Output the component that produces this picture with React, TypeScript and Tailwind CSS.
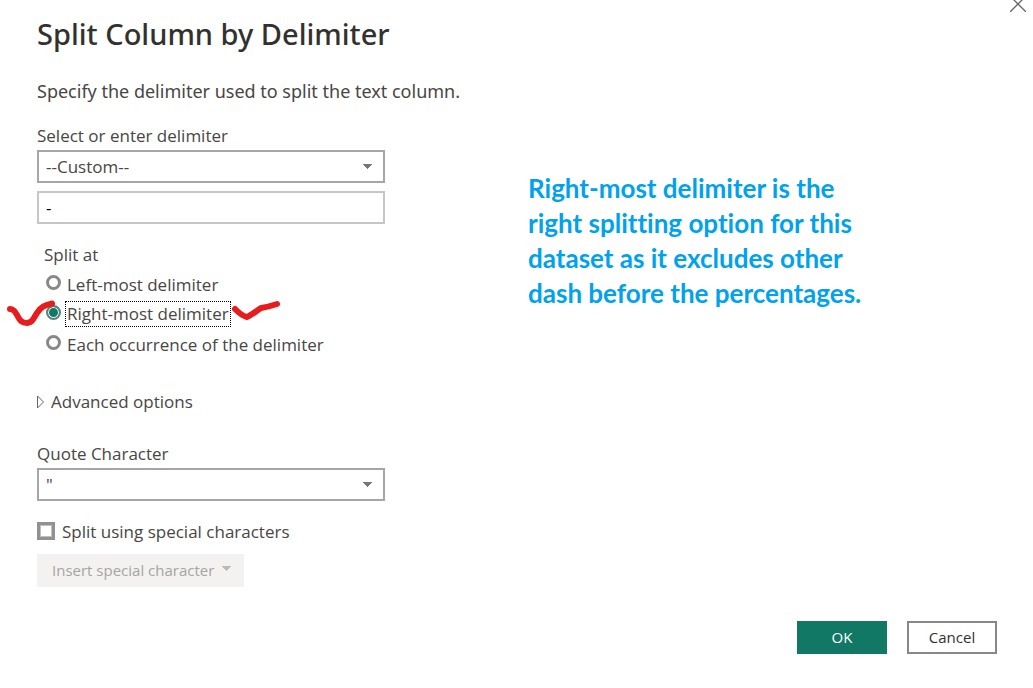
import { useState } from "react";

function Caret({ className }: { className: string }) {
  return (
    <svg viewBox="0 0 9 5" width="9" height="5" className={className} aria-hidden="true" shapeRendering="crispEdges">
      <path d="M0 0H9V1H8V2H7V3H6V4H5V5H4V4H3V3H2V2H1V1H0Z" fill="currentColor" />
    </svg>
  );
}

type DropdownProps = { id: string; label: string; options: string[] };

function Dropdown({ id, label, options }: DropdownProps) {
  return (
    <div className="flex flex-col">
      <label htmlFor={id} className="leading-6">
        {label}
      </label>
      <div className="relative mt-0.5">
        <select
          id={id}
          className="block h-[33px] w-full appearance-none border-2 border-[#a6a6a6] bg-white pr-8 pl-[7px] text-[17px] leading-6 outline-none"
        >
          {options.map((o) => (
            <option key={o}>{o}</option>
          ))}
        </select>
        <Caret className="pointer-events-none absolute top-3.5 right-[13px] text-[#777777]" />
      </div>
    </div>
  );
}

const SPLIT_OPTIONS = ["Left-most delimiter", "Right-most delimiter", "Each occurrence of the delimiter"];

function Tick({ className, d, viewBox, width, height }: { className: string; d: string; viewBox: string; width: number; height: number }) {
  return (
    <svg viewBox={viewBox} width={width} height={height} className={className} aria-hidden="true">
      <path d={d} fill="none" stroke="#e81c1c" strokeWidth="6" strokeLinecap="round" strokeLinejoin="round" />
    </svg>
  );
}

export default function App() {
  const [splitAt, setSplitAt] = useState(SPLIT_OPTIONS[1]);
  const [delimiter, setDelimiter] = useState("-");

  return (
    <main className="relative min-h-screen overflow-hidden bg-white pt-3.5 pr-9 pb-8 pl-[37px] font-['Open_Sans',sans-serif] text-[17px] text-[#484644]">
      <button type="button" aria-label="Close" className="absolute -top-1 right-[7px] size-4">
        <svg viewBox="0 0 16 16" width="16" height="16" aria-hidden="true">
          <path d="M0 0L16 16M16 0L0 16" fill="none" stroke="#666666" strokeWidth="1.3" />
        </svg>
      </button>

      <h1 className="font-['Noto_Sans',sans-serif] text-[29px] leading-10 font-medium text-[#323130]">Split Column by Delimiter</h1>
      <p className="mt-[23px] font-['Noto_Sans',sans-serif] text-[18px] leading-7">Specify the delimiter used to split the text column.</p>

      <div className="mt-[19px] flex items-start gap-[143px]">
        <form className="w-[348px] shrink-0">
          <Dropdown id="delimiter-kind" label="Select or enter delimiter" options={["--Custom--", "Comma", "Space", "Tab"]} />
          <input
            aria-label="Custom delimiter"
            value={delimiter}
            onChange={(e) => setDelimiter(e.target.value)}
            className="mt-2 block h-[33px] w-full border-2 border-[#c6c6c6] px-[7px] text-[17px] text-black outline-none"
          />

          <fieldset className="mt-4 pl-[7px]">
            <legend className="block leading-[30px]">Split at</legend>
            {SPLIT_OPTIONS.map((option) => {
              const marked = option === "Right-most delimiter";
              return (
                <div key={option} className="relative flex h-[30px] items-center">
                  <label className="flex items-center gap-1 whitespace-nowrap">
                    <input
                      type="radio"
                      name="split-at"
                      checked={splitAt === option}
                      onChange={() => setSplitAt(option)}
                      className="mb-1.5 ml-0.5 size-[15px] appearance-none rounded-full border-3 border-[#8a8886] bg-white outline-none checked:border-2 checked:border-[#5b857b] checked:bg-[#117865] checked:shadow-[inset_0_0_0_1px_#ffffff]"
                    />
                    <span
                      className={
                        splitAt === option
                          ? "mb-0.5 border border-dotted border-black px-px leading-6"
                          : "border border-transparent px-px leading-6"
                      }
                    >
                      {option}
                    </span>
                  </label>
                  {marked && (
                    <>
                      <Tick
                        className="pointer-events-none absolute -top-1 -left-[39px]"
                        viewBox="5 296 52 34"
                        width={52}
                        height={34}
                        d="M10 309C13 309 15 311 17 315C20 321 22 323 27 323C33 322 33 319 37 313C41 306 46 305 52 303.500"
                      />
                      <Tick
                        className="pointer-events-none absolute -top-1 left-[186px]"
                        viewBox="230 296 52 30"
                        width={52}
                        height={30}
                        d="M235 309C238 312 242 316 247 317C252 315 256 311 261 308C267 307 271 306 277 304"
                      />
                    </>
                  )}
                </div>
              );
            })}
          </fieldset>

          <button type="button" aria-expanded="false" className="mt-[27px] flex h-[30px] items-center gap-1.5">
            <svg viewBox="0 0 8 14" width="8" height="14" aria-hidden="true">
              <path d="M0.500 1V13L6.500 7Z" fill="none" stroke="#666666" />
            </svg>
            Advanced options
          </button>

          <div className="mt-[25px]">
            <Dropdown id="quote-character" label="Quote Character" options={['"', "None"]} />
          </div>

          <label className="mt-[19px] flex h-6 items-center gap-[7px]">
            <input type="checkbox" className="mb-0.5 size-[18px] appearance-none border-3 border-[#919191] bg-white shadow-[inset_0_0_0_1px_#c0c0c0] checked:bg-[#117865]" />
            Split using special characters
          </label>
          <button type="button" disabled className="mt-2.5 flex h-[33px] w-[207px] items-center justify-between bg-[#f3f2f1] pr-[13px] pl-[15px] text-[15px] text-[#a6a4a2]">
            Insert special character
            <Caret className="mb-1 text-[#bbbab8]" />
          </button>
        </form>

        <p className="mt-[47px] max-w-[350px] font-['Lato',sans-serif] text-[26px] leading-[35px] font-bold text-[#00a2ed] [font-variant-ligatures:none]">
          Right-most delimiter is the right splitting option for this dataset as it excludes other dash before the percentages.
        </p>
      </div>

      <footer className="mt-[34px] flex justify-end gap-5 text-[15px]">
        <button type="button" className="h-[33px] w-[90px] bg-[#117865] text-white">
          OK
        </button>
        <button type="button" className="h-[33px] w-[90px] border-2 border-[#8a8886] bg-white text-[#323130]">
          Cancel
        </button>
      </footer>
    </main>
  );
}
